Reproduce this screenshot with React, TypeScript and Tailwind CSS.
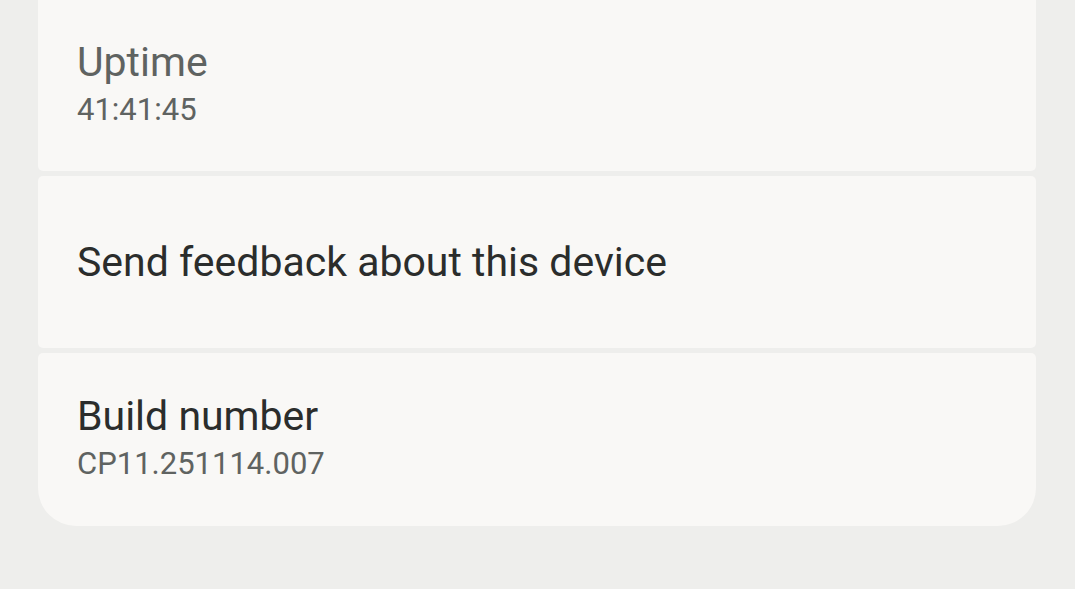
const rows = [
  { title: "Uptime", sub: "41:41:45", dim: true },
  { title: "Send feedback about this device" },
  { title: "Build number", sub: "CP11.251114.007" },
];

const App = () => {
  return (
    <div
      className="w-[1075px] h-[589px] bg-[#eeeeec] overflow-hidden"
      style={{ fontFamily: "Roboto, 'Liberation Sans', sans-serif" }}
    >
      <div className="mx-[38px] w-[998px] flex flex-col gap-[5px]">
        {rows.map((r, i) => (
          <div
            key={r.title}
            className={
              "bg-[#f9f8f6] flex flex-col justify-center px-[39px] " +
              (i === 0
                ? "h-[171px] rounded-b-[5px]"
                : i === 2
                ? "h-[173px] pt-[1px] rounded-t-[5px] rounded-b-[38px]"
                : "h-[172px] rounded-[5px]")
            }
          >
            <div
              className={
                "text-[41px] leading-[48px] " +
                (r.dim ? "text-[#5f6361]" : "text-[#2b2d2c]")
              }
            >
              {r.title}
            </div>
            {r.sub && (
              <div className="text-[31px] leading-[48px] text-[#5f6361]">{r.sub}</div>
            )}
          </div>
        ))}
      </div>
    </div>
  );
};

export default App;
